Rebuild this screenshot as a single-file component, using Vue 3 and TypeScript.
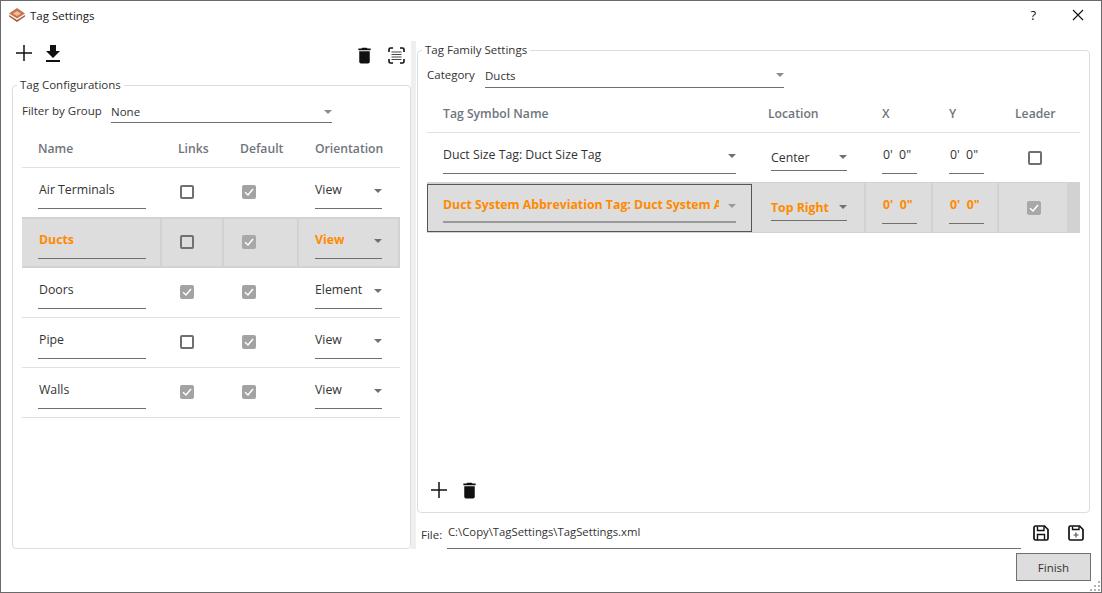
<script setup lang="ts">
interface TagConfig {
  name: string;
  links: boolean;
  isDefault: boolean;
  orientation: string;
}
interface TagFamily {
  symbol: string;
  location: string;
  x: string;
  y: string;
  leader: boolean;
}

const configs: TagConfig[] = [
  { name: "Air Terminals", links: false, isDefault: true, orientation: "View" },
  { name: "Ducts", links: false, isDefault: true, orientation: "View" },
  { name: "Doors", links: true, isDefault: true, orientation: "Element" },
  { name: "Pipe", links: false, isDefault: true, orientation: "View" },
  { name: "Walls", links: true, isDefault: true, orientation: "View" },
];
const selectedConfig = "Ducts";

const families: TagFamily[] = [
  { symbol: "Duct Size Tag: Duct Size Tag", location: "Center", x: "0'  0\"", y: "0'  0\"", leader: false },
  {
    symbol: "Duct System Abbreviation Tag: Duct System Abbreviation Tag",
    location: "Top Right",
    x: "0'  0\"",
    y: "0'  0\"",
    leader: true,
  },
];
const selectedFamily = 1;

const gripDots = [
  [8, 0],
  [4, 4],
  [8, 4],
  [0, 8],
  [4, 8],
  [8, 8],
];
</script>

<template>
  <div class="window">
    <header class="titlebar">
      <svg class="logo" width="16" height="14" viewBox="0 0 16 14">
        <polygon points="8,0 16,5.5 8,10.5 0,5.5" fill="#c9734a" />
        <polygon points="8,3 12,5.5 8,8 4,5.5" fill="#eebd9c" />
        <polygon points="0,7 8,12 16,7 16,8.5 8,14 0,8.5" fill="#a9583a" />
      </svg>
      <span class="title">Tag Settings</span>
      <span class="spacer" />
      <span class="help">?</span>
      <svg class="close" width="12" height="12" viewBox="0 0 12 12">
        <path d="M1 1L11 11M11 1L1 11" stroke="#111" stroke-width="1.1" fill="none" />
      </svg>
    </header>

    <div class="main">
      <section class="left">
        <div class="toolbar">
          <svg class="plus top-plus" width="16" height="16" viewBox="0 0 16 16">
            <path d="M8 0V16M0 8H16" stroke="#111" stroke-width="1.5" fill="none" />
          </svg>
          <svg class="icon dl" width="24" height="24" viewBox="0 0 24 24">
            <path d="M5,20H19V18H5M19,9H15V3H9V9H5L12,16L19,9Z" fill="#111" />
          </svg>
          <span class="spacer" />
          <svg class="icon trash" width="21" height="21" viewBox="0 0 24 24">
            <path d="M19,4H15.5L14.5,3H9.5L8.5,4H5V6H19M6,19A2,2 0 0,0 8,21H16A2,2 0 0,0 18,19V7H6V19Z" fill="#111" />
          </svg>
          <svg class="icon scan" width="17" height="17" viewBox="0 0 17 17">
            <path d="M1 5V2.5Q1 1 2.5 1H5M12 1H14.5Q16 1 16 2.5V5M16 12V14.5Q16 16 14.5 16H12M5 16H2.5Q1 16 1 14.5V12" stroke="#111" stroke-width="1.6" fill="none" />
            <path d="M3.5 5H13.5M3.5 7.5H13.5M3.5 10H13.5M3.5 12.5H13.5" stroke="#444" stroke-width="1.1" fill="none" />
          </svg>
        </div>

        <fieldset class="group left-group">
          <legend>Tag Configurations</legend>
          <div class="filter">
            <span class="filter-label">Filter by Group</span>
            <div class="filter-field">
              <span>None</span>
              <i class="arrow" />
            </div>
          </div>

          <div class="cfg-row cfg-head">
            <span class="h-cell">Name</span>
            <span class="h-cell">Links</span>
            <span class="h-cell">Default</span>
            <span class="h-cell">Orientation</span>
          </div>
          <div
            v-for="c in configs"
            :key="c.name"
            class="cfg-row"
            :class="{ selected: c.name === selectedConfig }"
          >
            <div class="cell name-cell">
              <div class="line name-field">{{ c.name }}</div>
            </div>
            <div class="cell check-cell">
              <span class="check" :class="{ on: c.links }">
                <svg v-if="c.links" width="10" height="10" viewBox="0 0 10 10">
                  <path d="M1 5.2L4 8L9 2" stroke="#fff" stroke-width="1.5" fill="none" />
                </svg>
              </span>
            </div>
            <div class="cell check-cell">
              <span class="check" :class="{ on: c.isDefault }">
                <svg v-if="c.isDefault" width="10" height="10" viewBox="0 0 10 10">
                  <path d="M1 5.2L4 8L9 2" stroke="#fff" stroke-width="1.5" fill="none" />
                </svg>
              </span>
            </div>
            <div class="cell orient-cell">
              <div class="line orient-field">
                <span>{{ c.orientation }}</span>
                <i class="arrow" />
              </div>
            </div>
          </div>
        </fieldset>
      </section>

      <div class="splitter" />

      <section class="right">
        <fieldset class="group right-group">
          <legend>Tag Family Settings</legend>
          <div class="category">
            <span class="cat-label">Category</span>
            <div class="cat-field">
              <span>Ducts</span>
              <i class="arrow" />
            </div>
          </div>

          <div class="fam-table">
            <div class="fam-row fam-head">
              <span class="h-cell">Tag Symbol Name</span>
              <span class="h-cell">Location</span>
              <span class="h-cell">X</span>
              <span class="h-cell">Y</span>
              <span class="h-cell">Leader</span>
            </div>
            <div
              v-for="(f, i) in families"
              :key="f.symbol"
              class="fam-row"
              :class="{ selected: i === selectedFamily }"
            >
              <div class="cell sym-cell">
                <div class="line sym-field">
                  <span class="clip">{{ f.symbol }}</span>
                  <i class="arrow" />
                </div>
              </div>
              <div class="cell loc-cell">
                <div class="line loc-field">
                  <span>{{ f.location }}</span>
                  <i class="arrow" />
                </div>
              </div>
              <div class="cell dim-cell">
                <div class="line dim-field">{{ f.x }}</div>
              </div>
              <div class="cell dim-cell">
                <div class="line dim-field">{{ f.y }}</div>
              </div>
              <div class="cell leader-cell">
                <span class="check" :class="{ on: f.leader }">
                  <svg v-if="f.leader" width="10" height="10" viewBox="0 0 10 10">
                    <path d="M1 5.2L4 8L9 2" stroke="#fff" stroke-width="1.5" fill="none" />
                  </svg>
                </span>
              </div>
            </div>
          </div>

          <div class="fam-actions">
            <svg class="plus" width="16" height="16" viewBox="0 0 16 16">
              <path d="M8 0V16M0 8H16" stroke="#111" stroke-width="1.5" fill="none" />
            </svg>
            <svg class="icon" width="21" height="21" viewBox="0 0 24 24">
              <path d="M19,4H15.5L14.5,3H9.5L8.5,4H5V6H19M6,19A2,2 0 0,0 8,21H16A2,2 0 0,0 18,19V7H6V19Z" fill="#111" />
            </svg>
          </div>
        </fieldset>

        <div class="file-row">
          <span class="file-label">File:</span>
          <div class="file-field">C:\Copy\TagSettings\TagSettings.xml</div>
          <svg class="save" width="16" height="16" viewBox="0 0 16 16">
            <path d="M2.5 1H11.5L15 4.5V13.5Q15 15 13.5 15H2.5Q1 15 1 13.5V2.5Q1 1 2.5 1Z" stroke="#111" stroke-width="1.7" fill="none" />
            <path d="M4.5 1.5V5.5H11V1.5M4.5 15V9.5H11.5V15" stroke="#111" stroke-width="1.4" fill="none" />
          </svg>
          <svg class="save saveas" width="16" height="16" viewBox="0 0 16 16">
            <path d="M2.5 1H11.5L15 4.5V13.5Q15 15 13.5 15H2.5Q1 15 1 13.5V2.5Q1 1 2.5 1Z" stroke="#111" stroke-width="1.7" fill="none" />
            <path d="M4.5 1.5V4.5H11V1.5" stroke="#111" stroke-width="1.4" fill="none" />
            <path d="M8 7.5V12.5M5.5 10H10.5" stroke="#555" stroke-width="1.2" fill="none" />
          </svg>
        </div>
      </section>
    </div>

    <footer class="footer">
      <button class="finish" type="button">Finish</button>
      <svg class="grip" width="10" height="10" viewBox="0 0 10 10">
        <rect v-for="d in gripDots" :key="d.join()" :x="d[0]" :y="d[1]" width="2" height="2" fill="#b4b4b4" />
      </svg>
    </footer>
  </div>
</template>

<style scoped>
.window {
  position: relative;
  box-sizing: border-box;
  width: 1102px;
  height: 593px;
  display: flex;
  flex-direction: column;
  background: #fff;
  border: 1px solid #6a6a6a;
  font-family: "Open Sans", "Noto Sans", sans-serif;
  font-size: 11.5px;
  color: #333;
  overflow: hidden;
}
.titlebar {
  display: flex;
  align-items: center;
  height: 28px;
  flex: none;
  padding-left: 8px;
}
.logo {
  margin-right: 5px;
}
.title {
  color: #1a1a1a;
}
.spacer {
  flex: 1;
}
.help {
  margin-right: 36px;
  font-size: 13px;
  color: #111;
}
.close {
  margin-right: 17px;
}

.main {
  display: flex;
  flex: none;
  height: 508px;
  margin-top: 12px;
}
.left {
  width: 399px;
  margin-left: 11px;
  flex: none;
  display: flex;
  flex-direction: column;
}
.toolbar {
  display: flex;
  align-items: center;
  height: 26px;
  flex: none;
  padding-left: 4px;
  margin-bottom: 10px;
}
.icon {
  display: block;
}
.top-plus {
  margin-top: -2px;
}
.dl {
  margin-left: 9px;
}
.trash {
  margin-top: 3px;
}
.scan {
  margin: 3px 6px 0 13px;
}

.group {
  min-width: 0;
  margin: 0;
  padding: 0;
  border: 1px solid #d5dfe6;
  border-radius: 4px;
}
legend {
  margin-left: 4px;
  padding: 0 3px;
  line-height: 16px;
  color: #333;
}
.left-group {
  flex: 1;
}

.filter {
  display: flex;
  align-items: flex-start;
  height: 37px;
  margin-left: 9px;
}
.filter-label {
  width: 89px;
  line-height: 18px;
  margin-top: 9px;
}
.filter-field,
.cat-field {
  display: flex;
  justify-content: space-between;
  align-items: center;
  box-sizing: content-box;
  border-bottom: 1px solid #707070;
}
.filter-field {
  width: 221px;
  height: 21px;
  margin-top: 8px;
}
.arrow {
  display: block;
  flex: none;
  width: 0;
  height: 0;
  border-left: 4px solid transparent;
  border-right: 4px solid transparent;
  border-top: 4px solid #707070;
}
.filter-field .arrow,
.cat-field .arrow {
  border-top-color: #8c8c8c;
}

.h-cell {
  padding-left: 16px;
  white-space: nowrap;
  font-size: 12.2px;
  font-weight: 600;
  color: #70757b;
}
.cfg-row {
  display: grid;
  grid-template-columns: 140px 62px 75px 1fr;
  box-sizing: border-box;
  width: 378px;
  height: 50px;
  margin-left: 9px;
  border-bottom: 1px solid #e0e0e0;
  font-size: 12.3px;
}
.cfg-head {
  height: 38px;
  align-items: center;
  padding-bottom: 1px;
}
.cell {
  display: flex;
  align-items: flex-start;
  min-width: 0;
}
.line {
  box-sizing: content-box;
  border-bottom: 1px solid #707070;
  line-height: 18px;
}
.name-field {
  width: 107px;
  height: 27px;
  margin-left: 16px;
  padding: 13px 0 0 1px;
}
.check-cell {
  align-items: center;
  padding-left: 18px;
}
.check-cell .check {
  transform: translateY(-1px);
}
.check {
  box-sizing: border-box;
  display: flex;
  align-items: center;
  justify-content: center;
  width: 14px;
  height: 14px;
  border: 2px solid #707070;
  border-radius: 2px;
  background: #fff;
}
.check.on {
  border: none;
  background: #a3a3a3;
}
.orient-cell {
  padding-left: 16px;
}
.orient-field {
  display: flex;
  justify-content: space-between;
  width: 67px;
  height: 27px;
  padding-top: 13px;
}
.orient-field .arrow {
  margin-top: 8px;
}

.cfg-row.selected,
.fam-row.selected {
  background: #dddddd;
  color: #ff8a00;
  font-weight: 700;
  border-top: 2px solid #d2d2d2;
  border-bottom: 2px solid #d2d2d2;
}
.cfg-row.selected {
  margin-top: -1px;
  height: 51px;
}
.cfg-row.selected .cell {
  border-right: 2px solid #d2d2d2;
}
.cfg-row.selected .name-field,
.cfg-row.selected .orient-field {
  height: 27px;
  padding-top: 12px;
}
.cfg-row.selected .check.on {
  background: #a8a8a8;
}
.cfg-row.selected .check:not(.on) {
  background: transparent;
}

.splitter {
  width: 5px;
  flex: none;
  background: #efefef;
}

.right {
  width: 673px;
  margin-left: 1px;
  flex: none;
  display: flex;
  flex-direction: column;
}
.right-group {
  height: 469px;
  flex: none;
  margin-top: 1px;
}
.category {
  display: flex;
  align-items: flex-start;
  height: 36px;
  margin-left: 9px;
}
.cat-label {
  width: 58px;
  line-height: 18px;
  margin-top: 8px;
}
.cat-field {
  width: 299px;
  height: 20px;
  padding-bottom: 2px;
  margin-top: 7px;
}

.fam-table {
  height: 379px;
}
.fam-row {
  display: grid;
  grid-template-columns: 325px 114px 67px 66px 70px 1fr;
  box-sizing: border-box;
  width: 653px;
  height: 50px;
  margin-left: 9px;
  border-bottom: 1px solid #e0e0e0;
  font-size: 12.3px;
}
.fam-head {
  height: 39px;
  align-items: center;
}
.sym-cell {
  padding-left: 16px;
}
.sym-field {
  display: flex;
  justify-content: space-between;
  box-sizing: content-box;
  width: 293px;
  height: 27px;
  padding-top: 13px;
}
.clip {
  width: 276px;
  white-space: nowrap;
  overflow: hidden;
}
.sym-field .arrow {
  margin-top: 8px;
}
.loc-cell {
  padding-left: 19px;
}
.loc-field {
  display: flex;
  justify-content: space-between;
  width: 76px;
  height: 21px;
  padding-top: 16px;
}
.loc-field .arrow {
  margin-top: 6px;
}
.dim-cell {
  padding-left: 16px;
}
.dim-field {
  width: 34px;
  height: 27px;
  padding: 13px 0 0 1px;
  white-space: pre;
}
.leader-cell {
  justify-content: center;
  align-items: center;
  padding-left: 1px;
}

.fam-row.selected {
  margin-top: -1px;
  height: 51px;
  background: #d2d2d2;
}
.fam-row.selected .cell {
  background: #dddddd;
  margin-top: -1px;
  border-right: 2px solid #d2d2d2;
}
.fam-row.selected .sym-cell {
  outline: 1px solid #555;
  outline-offset: -1px;
  border-right: none;
  margin-top: 0;
  height: 48px;
}
.fam-row.selected .sym-field {
  border-bottom: 2px solid #999;
  height: 25px;
  padding-top: 12px;
}
.fam-row.selected .sym-field .arrow {
  border-top-color: #9a9a9a;
}
.fam-row.selected .check.on {
  background: #a8a8a8;
}

.fam-actions {
  display: flex;
  align-items: center;
  gap: 12px;
  height: 34px;
  padding-left: 13px;
}

.file-row {
  display: flex;
  align-items: flex-start;
  height: 36px;
  margin-top: 6px;
}
.file-label {
  margin: 8px 0 0 4px;
  width: 26px;
  line-height: 16px;
}
.file-field {
  box-sizing: content-box;
  width: 573px;
  height: 25px;
  border-bottom: 1px solid #707070;
  padding: 4px 0 0 1px;
  line-height: 18px;
  font-size: 11.3px;
}
.save {
  margin: 6px 0 0 12px;
}
.saveas {
  margin-left: 19px;
}

.footer {
  flex: 1;
  display: flex;
  justify-content: flex-end;
  align-items: flex-start;
  position: relative;
}
.finish {
  width: 75px;
  height: 28px;
  margin: 4px 10px 0 0;
  padding: 0;
  border: 1px solid #707070;
  background: #dddddd;
  color: #333;
  font: inherit;
}
.grip {
  position: absolute;
  right: 1px;
  bottom: 1px;
}
</style>

<style>
html,
body {
  margin: 0;
  background: #fff;
}
</style>
